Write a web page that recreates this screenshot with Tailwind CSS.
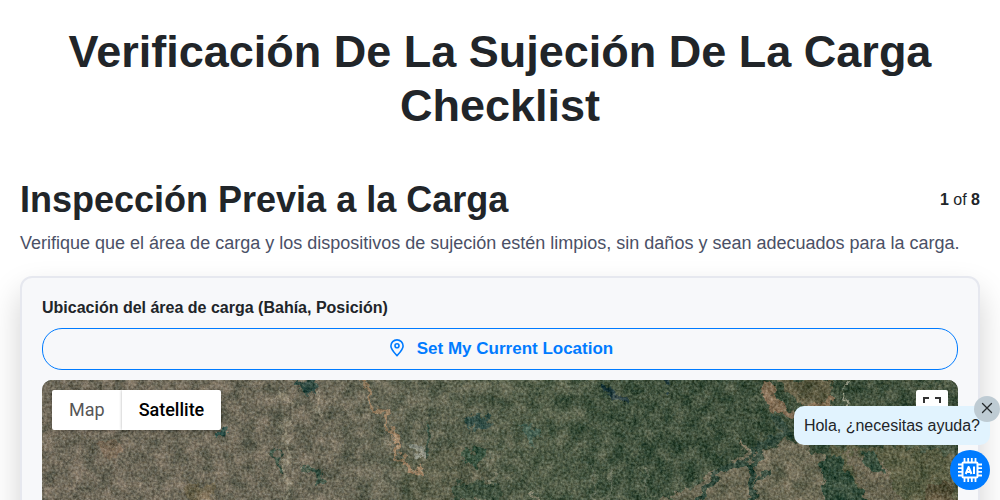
<!DOCTYPE html>
<html lang="es">
<head>
<meta charset="utf-8">
<meta name="viewport" content="width=device-width, initial-scale=1">
<title>Verificación De La Sujeción De La Carga Checklist</title>
<script src="https://cdn.jsdelivr.net/npm/@tailwindcss/browser@4"></script>
</head>
<body class="h-screen overflow-hidden bg-white font-['Liberation_Sans',Arial,sans-serif] text-[#212529]">
<main class="px-5 pt-[25px]">
  <h1 class="text-center text-[45px] leading-[54px] font-bold">Verificación De La Sujeción De La Carga Checklist</h1>

  <section class="mt-[43px]">
    <header class="flex items-center justify-between">
      <h2 class="text-[36px] leading-[48px] font-bold">Inspección Previa a la Carga</h2>
      <p class="text-base"><b>1</b> of <b>8</b></p>
    </header>
    <p class="mt-1 text-lg leading-[30px] text-[#4a5066]">Verifique que el área de carga y los dispositivos de sujeción estén limpios, sin daños y sean adecuados para la carga.</p>

    <div class="mt-[18px] rounded-[12px] border-2 border-[#e6e8ef] bg-[#f7f8fa] p-5 shadow-[0_16px_32px_rgba(0,0,0,0.18)]">
      <h3 class="text-base leading-5 font-bold">Ubicación del área de carga (Bahía, Posición)</h3>
      <button type="button" class="mt-[10px] flex h-[42px] w-full items-center justify-center gap-[10px] rounded-[20px] border border-[#007bff] text-[17px] font-bold text-[#007bff]">
        <svg class="size-5" viewBox="0 0 20 20" fill="none" stroke="currentColor" stroke-width="1.600" stroke-linejoin="round" aria-hidden="true">
          <path d="M10 16.700C8.300 14.700 3.900 10.600 3.900 7a6.100 6.100 0 0 1 12.200 0c0 3.600-4.400 7.700-6.100 9.700Z"/>
          <circle cx="10" cy="6.800" r="2"/>
        </svg>
        Set My Current Location
      </button>

      <div class="relative mt-[10px] h-[300px] overflow-hidden rounded-[10px] bg-[#495240]">
        <svg class="absolute inset-0 size-full" viewBox="0 0 916 300" preserveAspectRatio="xMidYMin slice" aria-hidden="true">
          <defs>
            <linearGradient id="land" gradientUnits="userSpaceOnUse" x1="0" y1="0" x2="916" y2="-60">
              <stop offset="0" stop-color="#6b6556"/>
              <stop offset=".3" stop-color="#666353"/>
              <stop offset=".4" stop-color="#5d604e"/>
              <stop offset=".54" stop-color="#4b5742"/>
              <stop offset=".63" stop-color="#3c4d39"/>
              <stop offset=".82" stop-color="#394a36"/>
              <stop offset="1" stop-color="#42503c"/>
            </linearGradient>
            <filter id="terrain" x="0" y="0" width="100%" height="100%" color-interpolation-filters="sRGB">
              <feTurbulence type="fractalNoise" baseFrequency=".08" numOctaves="5" seed="8" result="warp"/>
              <feDisplacementMap in="SourceGraphic" in2="warp" scale="20" xChannelSelector="R" yChannelSelector="G" result="shape"/>
              <feGaussianBlur in="shape" stdDeviation=".7" result="soft"/>
              <feTurbulence type="fractalNoise" baseFrequency=".38" numOctaves="3" seed="3"/>
              <feColorMatrix values=".9 .1 0 0 0  .9 .05 .05 0 0  .85 0 .15 0 0  0 0 0 0 1" result="grain"/>
              <feTurbulence type="fractalNoise" baseFrequency=".07" numOctaves="4" seed="21"/>
              <feColorMatrix values="1 0 0 0 0  .75 0 0 0 .125  .7 0 0 0 .15  0 0 0 0 1" result="patch"/>
              <feComposite in="soft" in2="grain" operator="arithmetic" k2="1" k3=".42" k4="-.2" result="grainy"/>
              <feComposite in="grainy" in2="patch" operator="arithmetic" k2="1" k3=".32" k4="-.15"/>
            </filter>
          </defs>
          <g filter="url(#terrain)">
            <rect x="-30" y="-30" width="976" height="360" fill="url(#land)"/>
            <path d="M350 82l60-17 35 25 12 38h-92z" fill="#575b47"/>
            <path d="M645 110l50-32 60-20 34 24 20 56H605l10-20z" fill="#666450"/>
            <path d="M785 68l60-2 75 10v60h-75z" fill="#54583f"/>
            <path d="M780 75l18 5 36 50h-48z" fill="#2f4735"/>
            <path d="M801 70l40 12 24 50h-34z" fill="#66624e"/>
            <path d="M820 72l14 2 10 22-16-4z" fill="#2f4735"/>
            <path d="M880 105l25-3 20 30h-40z" fill="#554f38"/>
            <path d="M735 0h60l-10 22-28 4z" fill="#59573f"/>
            <g fill="none" stroke-linecap="round" stroke-linejoin="round">
              <path d="M318-2l9 12 5 16 10 10 6 16 8 18 9 12 12 12" stroke="#927a5d" stroke-width="4"/>
              <path d="M386 42l-3 36M230 70l10 20M263 85l16 14" stroke="#3c5142" stroke-width="5"/>
              <path d="M242 40l4 36-2 50M276 12l2 20M236 14l14 6" stroke="#7f7a67" stroke-width="5"/>
              <path d="M370 66l10 12" stroke="#7f8477" stroke-width="6"/>
              <path d="M722 6l10 16 18 14" stroke="#7b6850" stroke-width="9"/>
              <path d="M765 28l24-6" stroke="#7c694f" stroke-width="6"/>
              <path d="M732 35l14 18-26 12-12 20 4 40M708 82l-24 4-24 30" stroke="#2c4335" stroke-width="7"/>
              <path d="M715 105l12-14" stroke="#2c4335" stroke-width="4"/>
              <path d="M699 64l12 8" stroke="#77705a" stroke-width="5"/>
              <path d="M550 84l4 36M566 92l6 28M602 88l5 30M648 110l8-8" stroke="#596450" stroke-width="3"/>
              <path d="M450 96l2 30M415 115l20 4M490 112l4 10" stroke="#7e7e69" stroke-width="4"/>
              <path d="M803 4l2 20" stroke="#8d917c" stroke-width="2"/>
              <path d="M560 4l12 12 12 5M626 0v8" stroke="#233a3b" stroke-width="7"/>
            </g>
            <path d="M258 0l16 2-2 12-14-2z" fill="#344c43"/>
            <path d="M178 48l8-2-2 14-6 2z" fill="#33524a"/>
            <path d="M423 37l20-3 8 10-22 7z" fill="#304a42"/>
            <path d="M478 44l20 6-4 16-14-8z" fill="#465f50"/>
            <path d="M421 72l22-4 4 12-17 7-12-9z" fill="#344d3a"/>
            <path d="M405 105l30-6 26 6-4 18h-42z" fill="#3a4c39"/>
            <path d="M140 108l30-4 2 12-26 4z" fill="#6c634c"/>
            <path d="M55 62l20-3 6 16-18 4z" fill="#766754"/>
          </g>
        </svg>
        <div class="absolute top-[10px] left-[10px] flex h-10 overflow-hidden rounded-[2px] bg-white font-['Roboto',Arial,sans-serif] text-lg shadow-[0_1px_4px_rgba(0,0,0,0.3)]">
          <button type="button" class="px-[17px] text-[#565656]">Map</button>
          <button type="button" class="px-[17px] font-medium text-black shadow-[0_0_3px_rgba(0,0,0,0.3)]">Satellite</button>
        </div>
        <button type="button" aria-label="Toggle fullscreen view" class="absolute top-[10px] right-[10px] grid size-8 place-items-center rounded-[2px] bg-white">
          <svg class="size-[18px]" viewBox="0 0 18 18" fill="none" stroke="#333" stroke-width="2" aria-hidden="true"><path d="M1 6V1h5M12 1h5v5M17 12v5h-5M6 17H1v-5"/></svg>
        </button>
      </div>
    </div>
  </section>
</main>

<aside class="fixed right-[10px] bottom-[10px] flex flex-col items-end gap-[5px]">
  <div class="relative rounded-[10px] bg-[#e1f3fe] px-[10px] py-[7px]">
    <p class="text-base leading-[25px]">Hola, ¿necesitas ayuda?</p>
    <button type="button" aria-label="Cerrar" class="absolute -top-[10px] -right-[10px] grid size-[26px] place-items-center rounded-full bg-[#becbd3]">
      <svg class="size-[14px]" viewBox="0 0 14 14" fill="none" stroke="#25292c" stroke-width="1.300" stroke-linecap="round" aria-hidden="true"><path d="M2.500 1.500l9 9M11.500 1.500l-9 9"/></svg>
    </button>
  </div>
  <button type="button" aria-label="Asistente de IA" class="grid size-10 place-items-center rounded-full bg-[#007bff]">
    <svg class="size-6" viewBox="0 0 24 24" fill="none" stroke="white" stroke-width="2" stroke-linejoin="round" aria-hidden="true">
      <rect x="4.500" y="4.500" width="15" height="15" rx="1"/>
      <path d="M6.500 4V0M10.200 4V0M13.800 4V0M17.500 4V0M6.500 20v4M10.200 20v4M13.800 20v4M17.500 20v4M4 6.500H0M4 10.200H0M4 13.800H0M4 17.500H0M20 6.500h4M20 10.200h4M20 13.800h4M20 17.500h4" stroke-width="1.800"/>
      <path d="M7.700 16l2.900-7 2.900 7M8.700 14h3.800M16 8.500V16"/>
    </svg>
  </button>
</aside>
</body>
</html>
